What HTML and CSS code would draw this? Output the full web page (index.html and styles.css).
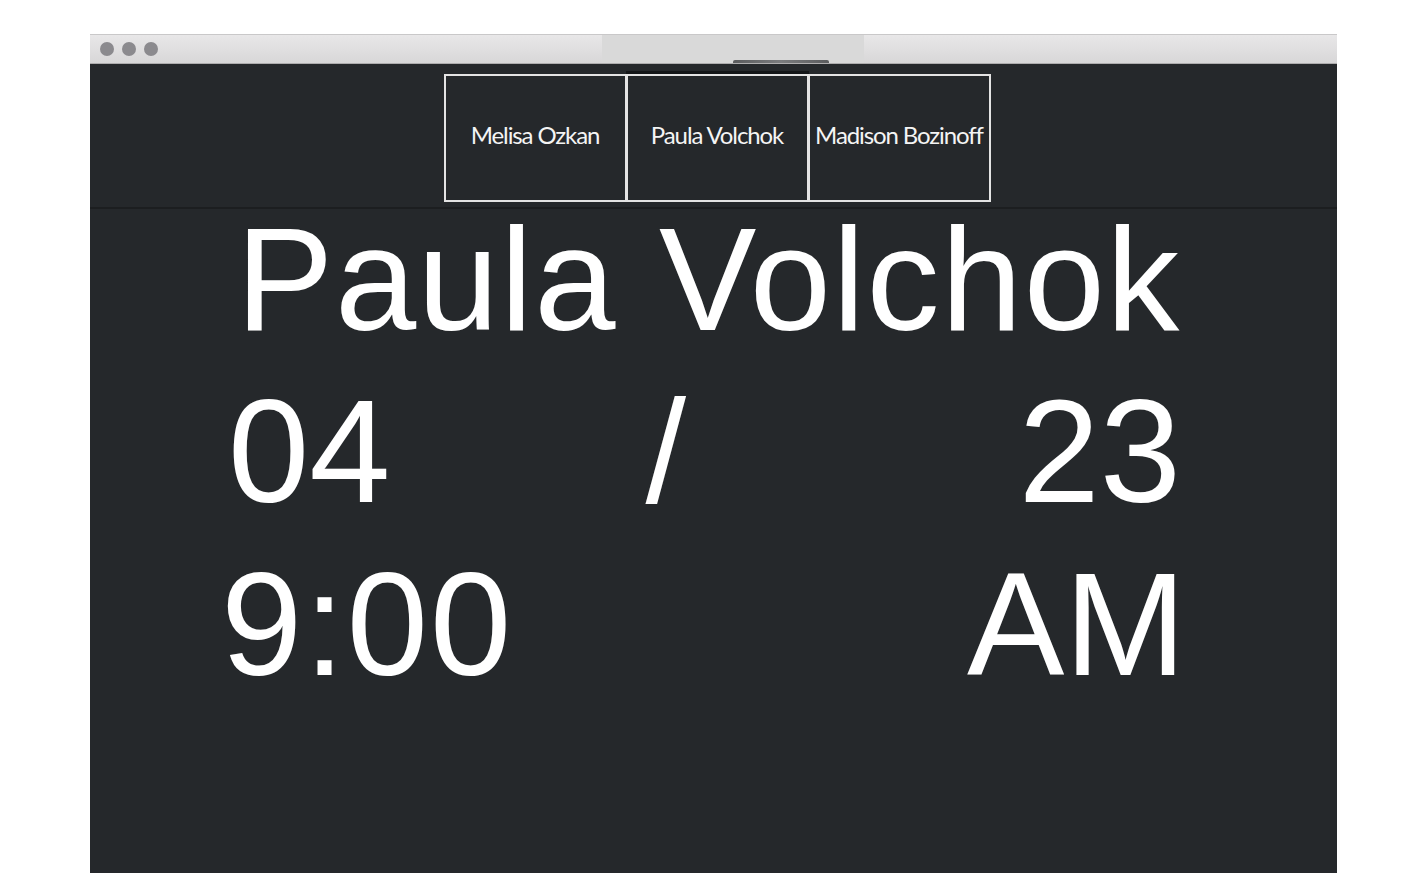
FILE: index.html
```html
<!DOCTYPE html>
<html>
<head>
<meta charset="utf-8">
<link rel="stylesheet" href="styles.css">
</head>
<body>
<div class="window">
  <div class="titlebar">
    <div class="dots">
      <span class="dot"></span><span class="dot"></span><span class="dot"></span>
    </div>
    <div class="title-center"><span class="handle"></span></div>
  </div>
  <div class="header">
    <div class="tabs">
      <div class="tab">Melisa Ozkan</div>
      <div class="tab active">Paula Volchok</div>
      <div class="tab">Madison Bozinoff</div>
    </div>
  </div>
  <div class="main">
    <div class="row name">Paula Volchok</div>
    <div class="row date">
      <span>04</span>
      <span class="slash">/</span>
      <span class="push">23</span>
    </div>
    <div class="row time">
      <span class="clock">9:00</span>
      <span class="push">AM</span>
    </div>
  </div>
</div>
</body>
</html>
```
FILE: styles.css
```css
html, body {
  margin: 0;
  padding: 0;
  background: #ffffff;
  overflow: hidden;
}
.window {
  margin: 34px 0 0 90px;
  width: 1247px;
  height: 839px;
  display: flex;
  flex-direction: column;
  background: #25282b;
  overflow: hidden;
}
.titlebar {
  flex: none;
  display: flex;
  align-items: stretch;
  background: linear-gradient(#e8e7e8, #d8d7d8);
  border-top: 1px solid #c9c8c9;
  border-bottom: 1px solid #aeadae;
  box-sizing: border-box;
  height: 30px;
}
.dots {
  display: flex;
  gap: 8px;
  align-items: center;
  padding-left: 10px;
  width: 512px;
  box-sizing: border-box;
}
.dot {
  width: 14px;
  height: 14px;
  border-radius: 50%;
  background: #8b8a8e;
}
.title-center {
  width: 262px;
  background: #d9d9d9;
  display: flex;
  justify-content: center;
  align-items: flex-end;
  padding-left: 96px;
  box-sizing: border-box;
}
.handle {
  width: 96px;
  height: 3px;
  border-radius: 2px 2px 0 0;
  background: linear-gradient(90deg, #5a5b5d, #7b7c7e, #5a5b5d);
}
.header {
  height: 145px;
  flex: none;
  box-sizing: border-box;
  border-bottom: 2px solid #1c1e20;
  display: flex;
  justify-content: center;
  padding-top: 10px;
  padding-left: 8px;
}
.tabs {
  display: flex;
  height: 128px;
}
.tab {
  width: 183px;
  box-sizing: border-box;
  border: 2px solid #e4e4e4;
  margin-left: -1px;
  display: flex;
  align-items: center;
  justify-content: center;
  padding-bottom: 8px;
  color: #f4f4f4;
  font-family: Lato, "Noto Sans", sans-serif;
  font-size: 24px;
  letter-spacing: -1.1px;
  white-space: nowrap;
}
.tab.active {
  box-shadow: 0 -3px 0 #141618;
}
.main {
  flex: 1;
  padding: 0 151px 0 136px;
  color: #ffffff;
  font-family: "Liberation Sans", Arial, sans-serif;
  font-size: 146px;
  line-height: 145px;
  display: flex;
  flex-direction: column;
  gap: 27px;
  margin-top: -2px;
}
.row {
  display: flex;
  white-space: nowrap;
}
.name {
  padding-left: 10px;
  letter-spacing: 1.5px;
}
.date {
  margin-left: 2px;
  margin-right: 5px;
}
.slash {
  margin-left: 255px;
}
.push {
  margin-left: auto;
}
.time {
  margin-top: 1px;
  margin-left: -5px;
  margin-right: 0;
}
.clock {
  letter-spacing: 2px;
}
```
